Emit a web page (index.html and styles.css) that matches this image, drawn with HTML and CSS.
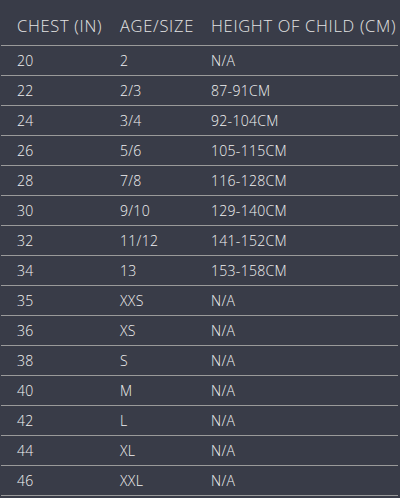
FILE: index.html
```html
<!DOCTYPE html>
<html>
<head>
<meta charset="utf-8">
<link rel="stylesheet" href="styles.css">
</head>
<body>
<div class="table">
  <div class="row head"><span>CHEST (IN)</span><span>AGE/SIZE</span><span>HEIGHT OF CHILD (CM)</span></div>
  <div class="row"><span>20</span><span>2</span><span>N/A</span></div>
  <div class="row"><span>22</span><span>2/3</span><span>87-91CM</span></div>
  <div class="row"><span>24</span><span>3/4</span><span>92-104CM</span></div>
  <div class="row"><span>26</span><span>5/6</span><span>105-115CM</span></div>
  <div class="row"><span>28</span><span>7/8</span><span>116-128CM</span></div>
  <div class="row"><span>30</span><span>9/10</span><span>129-140CM</span></div>
  <div class="row"><span>32</span><span>11/12</span><span>141-152CM</span></div>
  <div class="row"><span>34</span><span>13</span><span>153-158CM</span></div>
  <div class="row"><span>35</span><span>XXS</span><span>N/A</span></div>
  <div class="row"><span>36</span><span>XS</span><span>N/A</span></div>
  <div class="row"><span>38</span><span>S</span><span>N/A</span></div>
  <div class="row"><span>40</span><span>M</span><span>N/A</span></div>
  <div class="row"><span>42</span><span>L</span><span>N/A</span></div>
  <div class="row"><span>44</span><span>XL</span><span>N/A</span></div>
  <div class="row"><span>46</span><span>XXL</span><span>N/A</span></div>
</div>
</body>
</html>
```
FILE: styles.css
```css
html, body {
  margin: 0;
  padding: 0;
  background: #393c48;
}
.table {
  width: 400px;
  font-family: "Open Sans", sans-serif;
  font-weight: 300;
  color: #f2f2f2;
}
.row {
  display: grid;
  grid-template-columns: 103px 91px 1fr;
  height: 29px;
  align-items: center;
  margin: 0 2px 0 1px;
  border-bottom: 1px solid #9a9a9a;
  font-size: 14px;
  letter-spacing: 0.3px;
}
.row span {
  padding-left: 16px;
  white-space: nowrap;
}
.head {
  box-sizing: border-box;
  height: 46px;
  font-size: 16.5px;
  letter-spacing: 0.7px;
  color: #e4e4e4;
}
.head span { padding-top: 5px; }
```
